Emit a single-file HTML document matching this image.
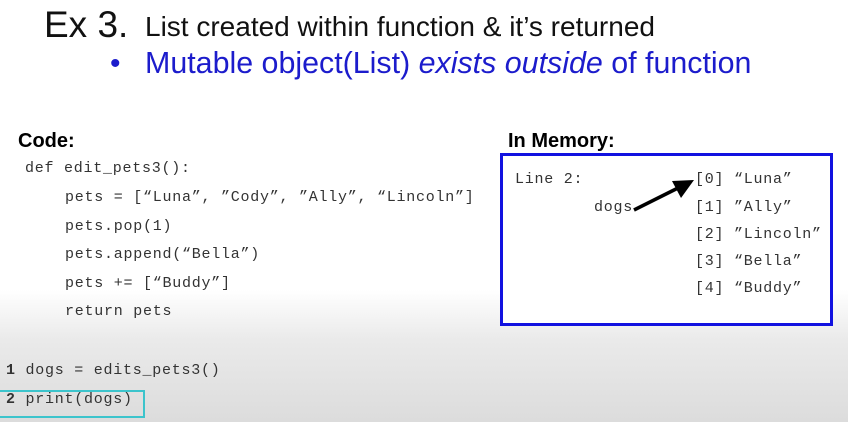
<!DOCTYPE html>
<html><head><style>
body{margin:0;width:848px;height:422px;overflow:hidden;position:relative;font-family:"Liberation Sans",sans-serif;
background:linear-gradient(#fff 0,#fff 290px,#eaeaea 340px,#dcdcdc 422px);}
.a{position:absolute;white-space:pre;line-height:1;}
.m{font-family:"Liberation Mono",monospace;font-size:15px;letter-spacing:0.75px;color:#333;}
</style></head><body>
<div class="a" style="left:44px;top:6px;font-size:37px;color:#111">Ex 3.</div>
<div class="a" style="left:145px;top:13px;font-size:28px;color:#111">List created within function &amp; it’s returned</div>
<div class="a" style="left:110px;top:49px;font-size:30px;color:#1c1ccc">•</div>
<div class="a" style="left:145px;top:48px;font-size:30.4px;color:#1c1ccc">Mutable object(List) <i>exists outside</i> of function</div>
<div class="a" style="left:18px;top:131px;font-size:20px;font-weight:bold;color:#000">Code:</div>
<div class="a m" style="left:25px;top:161px">def edit_pets3():</div>
<div class="a m" style="left:65px;top:190px">pets = [“Luna”, ”Cody”, ”Ally”, “Lincoln”]</div>
<div class="a m" style="left:65px;top:219px">pets.pop(1)</div>
<div class="a m" style="left:65px;top:247px">pets.append(“Bella”)</div>
<div class="a m" style="left:65px;top:276px">pets += [“Buddy”]</div>
<div class="a m" style="left:65px;top:304px">return pets</div>
<div class="a m" style="left:6px;top:363px"><b>1</b> dogs = edits_pets3()</div>
<div class="a m" style="left:6px;top:392px"><b>2</b> print(dogs)</div>
<div style="position:absolute;left:-2px;top:390px;width:143px;height:24px;border:2px solid #3cc4cc"></div>
<div class="a" style="left:508px;top:131px;font-size:20px;font-weight:bold;color:#000">In Memory:</div>
<div style="position:absolute;left:500px;top:153px;width:327px;height:167px;border:3px solid #1212e0;background:#fff"></div>
<div class="a m" style="left:515px;top:172px">Line 2:</div>
<div class="a m" style="left:594px;top:200px">dogs</div>
<div class="a m" style="left:695px;top:172px">[0] “Luna”</div>
<div class="a m" style="left:695px;top:200px">[1] ”Ally”</div>
<div class="a m" style="left:695px;top:227px">[2] ”Lincoln”</div>
<div class="a m" style="left:695px;top:254px">[3] “Bella”</div>
<div class="a m" style="left:695px;top:281px">[4] “Buddy”</div>
<svg style="position:absolute;left:0;top:0" width="848" height="422">
<line x1="634" y1="210" x2="678" y2="188" stroke="#000" stroke-width="3.5"/>
<polygon points="694,180 672,181 681,198" fill="#000"/>
</svg>
</body></html>
